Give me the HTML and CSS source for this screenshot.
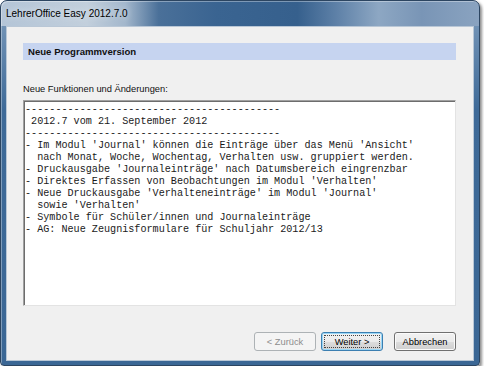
FILE: index.html
```html
<!DOCTYPE html>
<html lang="de">

<head>
    <meta charset="UTF-8">
    <meta name="viewport" content="width=device-width, initial-scale=1.0">
    <title>LehrerOffice Easy 2012.7.0</title>
    <link rel="stylesheet" href="styles.css">
</head>

<body>
    <div class="window">
        <div class="titlebar">LehrerOffice Easy 2012.7.0</div>
        <div class="client">
            <div class="header">Neue Programmversion</div>
            <div class="label">Neue Funktionen und Änderungen:</div>
            <div class="textbox">
<pre class="notes">------------------------------------------
 2012.7 vom 21. September 2012
------------------------------------------
- Im Modul 'Journal' können die Einträge über das Menü 'Ansicht'
  nach Monat, Woche, Wochentag, Verhalten usw. gruppiert werden.
- Druckausgabe 'Journaleinträge' nach Datumsbereich eingrenzbar
- Direktes Erfassen von Beobachtungen im Modul 'Verhalten'
- Neue Druckausgabe 'Verhalteneinträge' im Modul 'Journal'
  sowie 'Verhalten'
- Symbole für Schüler/innen und Journaleinträge
- AG: Neue Zeugnisformulare für Schuljahr 2012/13</pre>
            </div>
            <div class="buttons">
                <button class="btn back" disabled>&lt; Zurück</button>
                <button class="btn next">Weiter &gt;</button>
                <button class="btn">Abbrechen</button>
            </div>
        </div>
    </div>
</body>

</html>
```

FILE: styles.css
```css
body {
    margin: 0;
    background: #fff;
    font-family: "Liberation Sans", Arial, sans-serif;
}

/* fensterrahmen */
.window {
    width: 480px;
    height: 366px;
    box-sizing: border-box;
    padding: 0 5px 4px 5px;
    border: 1px solid #2c4561;
    border-radius: 7px 7px 4px 4px;
    background:
        linear-gradient(to right, #b4c5d7 0, #c2cfdc 18%, #a3b7cc 26%, #4a7099 33%, #3a6491 45%, #36608d 62%, #5d80a7 70%, #8da7c3 79%, #7995b6 88%, #8aa3c0 100%) no-repeat 0 0 / 100% 25px,
        linear-gradient(#7f9dbd, #3e6a98 30%, #3b6795);
    box-shadow: 2px 2px 3px rgba(0, 0, 0, 0.45), inset 1px 1px 0 rgba(255, 255, 255, 0.35);
    display: flex;
    flex-direction: column;
}

.titlebar {
    height: 25px;
    line-height: 25px;
    padding-left: 0;
    margin-left: 0;
    font-size: 10px;
    color: #000;
    text-shadow: 0 0 6px #e6edf4;
}

.client {
    flex: 1;
    display: flex;
    flex-direction: column;
    background: #f0f0f0;
    border: 1px solid #b9c7d6;
    padding: 16px 17px 8px 16px;
}

.header {
    height: 17px;
    line-height: 17px;
    padding-left: 5px;
    background: #c6d4f0;
    font-size: 9.6px;
    font-weight: bold;
    color: #111;
}

.label {
    margin-top: 23px;
    height: 12px;
    line-height: 12px;
    font-size: 9.3px;
    color: #111;
}

.textbox {
    margin-top: 5px;
    height: 206px;
    box-sizing: border-box;
    background: #fff;
    border-top: 1px solid #a0a0a0;
    border-left: 1px solid #a0a0a0;
    border-right: 1px solid #e3e3e3;
    border-bottom: 1px solid #e3e3e3;
    box-shadow: inset 1px 1px 0 #6d6d6d;
    overflow: hidden;
}

.notes {
    margin: 0;
    padding: 3px 0 0 1px;
    font-family: "Liberation Mono", "Courier New", monospace;
    font-size: 10.15px;
    line-height: 12px;
    color: #1a1a1a;
}

/* knoepfe */
.buttons {
    margin-top: 26px;
    display: flex;
    justify-content: flex-end;
}

.btn {
    position: relative;
    width: 62px;
    height: 19px;
    padding: 0;
    box-sizing: border-box;
    border: 1px solid #707070;
    border-radius: 3px;
    background: linear-gradient(#f2f2f2 0, #ebebeb 50%, #dddddd 50%, #cfcfcf 100%);
    box-shadow: inset 0 0 0 1px #fbfbfb;
    font-family: "Liberation Sans", Arial, sans-serif;
    font-size: 9.3px;
    color: #000;
}

.back {
    margin-right: 5px;
    border-color: #adb2b5;
    background: #f4f4f4;
    box-shadow: none;
    color: #8d8d8d;
}

.next {
    margin-right: 11px;
    border-color: #3c7fb1;
    box-shadow: inset 0 0 0 1px #9ad7f7;
}

.next::after {
    content: "";
    position: absolute;
    left: 2px;
    top: 2px;
    right: 2px;
    bottom: 2px;
    border: 1px dotted #444;
}
```
